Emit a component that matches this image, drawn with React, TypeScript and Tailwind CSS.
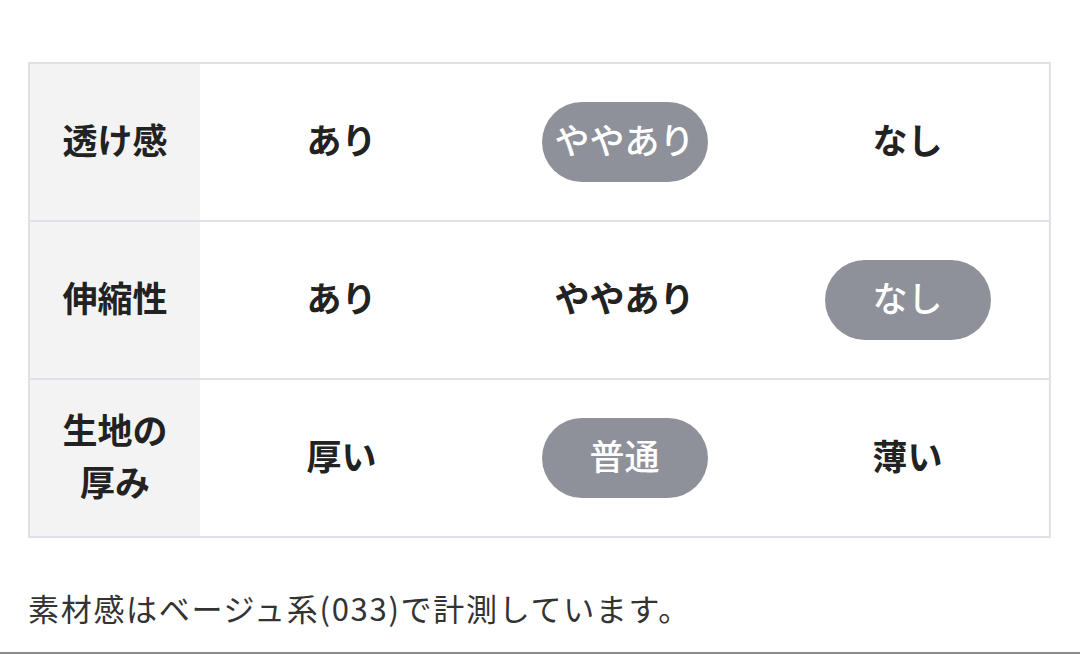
import React from 'react';

type Row = {
  label: string[];
  options: string[];
  selected: number;
};

const rows: Row[] = [
  { label: ['透け感'], options: ['あり', 'ややあり', 'なし'], selected: 1 },
  { label: ['伸縮性'], options: ['あり', 'ややあり', 'なし'], selected: 2 },
  { label: ['生地の', '厚み'], options: ['厚い', '普通', '薄い'], selected: 1 },
];

const font = { fontFamily: '"Noto Sans CJK JP", "Noto Sans", sans-serif' };

export default function App() {
  return (
    <div className="w-[1080px] h-[654px] bg-white relative overflow-hidden" style={font}>
      <div className="pt-[62px] pl-[28px] pr-[29px]">
        {/* Material table */}
        <div className="border-2 border-[#e0e0e8]">
          {rows.map((row, i) => (
            <div
              key={i}
              className={`flex ${i > 0 ? 'h-[158px] border-t-2 border-[#e0e0e8]' : 'h-[156px]'}`}
            >
              <div className="w-[170px] shrink-0 bg-[#f3f3f4] flex flex-col items-center justify-center pb-[6px] text-[35px] leading-[52px] font-semibold text-[#222]">
                {row.label.map((l) => (
                  <span key={l}>{l}</span>
                ))}
              </div>
              <div className="flex-1 grid grid-cols-3">
                {row.options.map((opt, j) => (
                  <div key={opt + j} className="flex items-center justify-center">
                    {j === row.selected ? (
                      <span className="w-[166px] h-[80px] pb-[5px] rounded-full bg-[#8e9199] text-white text-[35px] font-medium flex items-center justify-center">
                        {opt}
                      </span>
                    ) : (
                      <span className="pb-[6px] text-[35px] font-semibold text-[#222]">{opt}</span>
                    )}
                  </div>
                ))}
              </div>
            </div>
          ))}
        </div>
        <p className="mt-[47px] text-[31px] leading-[46px] tracking-[1.7px] text-[#333]">
          素材感はベージュ系(033)で計測しています。
        </p>
      </div>
      <div className="absolute left-0 right-0 bottom-0 h-[2px] bg-[#8a8a8a]" />
    </div>
  );
}
